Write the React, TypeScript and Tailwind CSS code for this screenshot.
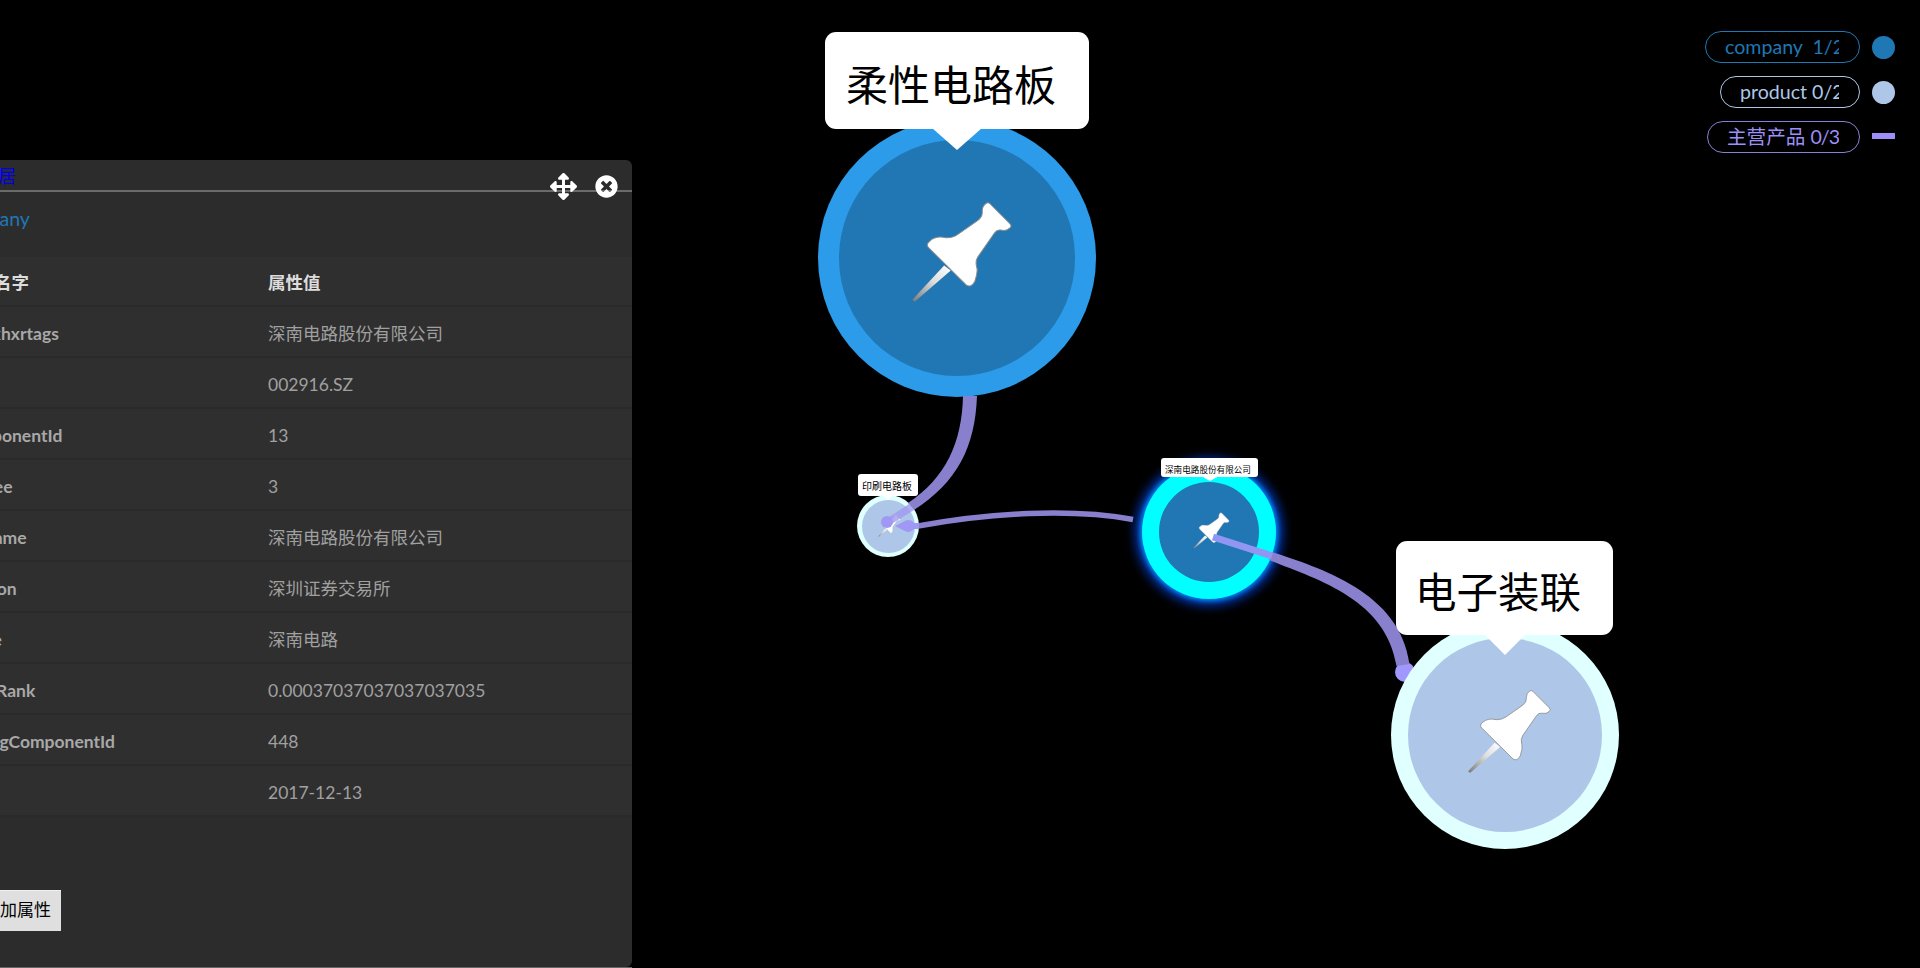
import { FaArrowsAlt, FaTimesCircle } from "react-icons/fa";

const LATO = "font-['Lato','Noto_Sans_CJK_SC',sans-serif]";

const rows: [string, string][] = [
  ["stockhxrtags", "深南电路股份有限公司"],
  ["code", "002916.SZ"],
  ["componentId", "13"],
  ["degree", "3"],
  ["fullname", "深南电路股份有限公司"],
  ["portion", "深圳证券交易所"],
  ["name", "深南电路"],
  ["pageRank", "0.00037037037037037035"],
  ["strongComponentId", "448"],
  ["date", "2017-12-13"],
];

function Pin({ size, className }: { size: number; className: string }) {
  return (
    <svg width={size} height={size} viewBox="335 545 305 305" className={className}>
      <defs>
        <linearGradient id="needle" x1="0" y1="1" x2="1" y2="0">
          <stop offset="0" stopColor="#777777" />
          <stop offset="0.55" stopColor="#dddddd" />
          <stop offset="1" stopColor="#ffffff" />
        </linearGradient>
      </defs>
      <path d="M434 738 L454 753 L346 846 L339 840 Z" fill="url(#needle)" />
      <path
        d="M548 575 Q548 560 560 552 Q566 548 572 554 L630 612 Q638 620 630 626 Q620 636 603 632 Q592 630 585 640 L535 712 Q526 726 532 745 Q535 760 526 785 Q515 806 500 796 L388 685 Q378 675 392 664 Q410 648 440 655 Q460 656 475 645 L535 603 Q550 592 548 575 Z"
        fill="#ffffff"
        stroke="#8c8c8c"
        strokeWidth="3"
      />
    </svg>
  );
}

function Label({
  text,
  boxClass,
  textClass,
  arrowClass,
}: {
  text: string;
  boxClass: string;
  textClass: string;
  arrowClass: string;
}) {
  return (
    <div className={`absolute z-10 flex items-center whitespace-nowrap bg-white text-black font-['Noto_Sans_CJK_SC',sans-serif] ${boxClass}`}>
      <span className={textClass}>{text}</span>
      <div className={`absolute top-full left-1/2 -translate-x-1/2 -translate-y-[1px] border-x-transparent border-t-white ${arrowClass}`} />
    </div>
  );
}

function Graph() {
  return (
    <div className="absolute inset-0">
      {/* arrow head that lies under node 4 */}
      <svg className="absolute inset-0" width="1920" height="968" viewBox="0 0 1920 968">
        <circle cx="1405" cy="672" r="10" fill="#a098ff" />
      </svg>
      {/* node 1 */}
      <div className="absolute left-[818px] top-[119px] w-[278px] h-[278px] rounded-full bg-[#2b9bea] flex items-center justify-center">
        <div className="w-[236px] h-[236px] rounded-full bg-[#2077b4] flex items-center justify-center">
          <Pin size={102} className="translate-x-[5px] -translate-y-[6px]" />
        </div>
      </div>
      {/* node 2 */}
      <div className="absolute left-[857px] top-[495px] w-[62px] h-[62px] rounded-full bg-[#e0ffff] flex items-center justify-center">
        <div className="w-[53px] h-[53px] rounded-full bg-[#aec7e8] flex items-center justify-center">
          <Pin size={23} className="translate-x-[1px] -translate-y-[1px]" />
        </div>
      </div>
      {/* node 3 */}
      <div className="absolute left-[1142px] top-[465px] w-[134px] h-[134px] rounded-full bg-[#00ffff] shadow-[0_0_5px_2px_#0090ff,0_0_10px_8px_#002a90] flex items-center justify-center">
        <div className="w-[100px] h-[100px] rounded-full bg-[#2077b4] flex items-center justify-center">
          <Pin size={37} className="translate-x-[2px] -translate-y-[2px]" />
        </div>
      </div>
      {/* node 4 */}
      <div className="absolute left-[1391px] top-[621px] w-[228px] h-[228px] rounded-full bg-[#e0ffff] flex items-center justify-center">
        <div className="w-[194px] h-[194px] rounded-full bg-[#aec7e8] flex items-center justify-center">
          <Pin size={85} className="translate-x-[4px] -translate-y-[4px]" />
        </div>
      </div>

      {/* links */}
      <svg className="absolute inset-0" width="1920" height="968" viewBox="0 0 1920 968">
        {/* node 1 to node 2 */}
        <path d="M963 396 L977 396 C975 448 957 482 914 510 L908 503 C946 478 962 442 963 396 Z" fill="#8880cc" />
        <path d="M909 504 L914 510 L890 525 L886 519 Z" fill="#a098f0" opacity="0.8" />
        <circle cx="887" cy="522" r="6" fill="#a098f5" />
        {/* node 3 to node 2 */}
        <path d="M918 526 C990 513 1070 508 1133 519.5" fill="none" stroke="#8880cc" strokeWidth="5.5" />
        <path d="M895 526 L907 520 Q913 520 914 523 L919 523 L919 529 L914 529 Q912 532 907 532 Z" fill="#a098f5" />
        {/* node 3 to node 4 */}
        <path d="M1272 552 C1320 568 1400 592 1409.5 664 L1396.5 666 C1386 600 1320 580 1269 560 Z" fill="#8880cc" />
        <path d="M1213 537 L1272 556" fill="none" stroke="#9096f2" strokeWidth="7" />
      </svg>

      <Label
        text="柔性电路板"
        boxClass="left-[825px] top-[32px] w-[264px] h-[97px] rounded-[11px] pl-[21px]"
        textClass="text-[42px] leading-none mt-[5px]"
        arrowClass="border-x-[25px] border-t-[22px]"
      />
      <Label
        text="印刷电路板"
        boxClass="left-[858px] top-[474px] w-[60px] h-[22px] rounded-[3px] pl-[4px]"
        textClass="text-[10px] leading-none mt-[1px]"
        arrowClass="border-x-[5px] border-t-[5px]"
      />
      <Label
        text="深南电路股份有限公司"
        boxClass="left-[1161px] top-[458px] w-[97px] h-[19px] rounded-[3px] pl-[4px]"
        textClass="text-[8.6px] leading-none mt-[3px]"
        arrowClass="border-x-[9px] border-t-[5px]"
      />
      <Label
        text="电子装联"
        boxClass="left-[1396px] top-[541px] w-[217px] h-[94px] rounded-[11px] pl-[19px]"
        textClass="text-[41.5px] leading-none mt-[5px]"
        arrowClass="border-x-[21px] border-t-[21px]"
      />
    </div>
  );
}

function Legend() {
  return (
    <div className={`absolute right-[25px] top-[31px] flex flex-col items-end gap-[13px] text-[19.6px] ${LATO}`}>
      <div className="flex items-center gap-[12px]">
        <div className="w-[155px] h-[32px] rounded-full border-[1.5px] border-[#1f77b4] text-[#1f77b4] pl-[19px]">
          <div className="w-[114px] overflow-hidden whitespace-pre leading-[30px]">company  1/2</div>
        </div>
        <div className="w-[23px] h-[23px] rounded-full bg-[#1f77b4]" />
      </div>
      <div className="flex items-center gap-[12px]">
        <div className="w-[140px] h-[32px] rounded-full border-[1.5px] border-[#aec7e8] text-[#aec7e8] pl-[19px]">
          <div className="w-[99px] overflow-hidden whitespace-pre leading-[30px]">product 0/2</div>
        </div>
        <div className="w-[23px] h-[23px] rounded-full bg-[#aec7e8]" />
      </div>
      <div className="flex items-center gap-[12px]">
        <div className="w-[153px] h-[32px] rounded-full border-[1.5px] border-[#8a7fd6] text-[#9c8ff5] pl-[19px]">
          <div className="w-[112px] overflow-hidden whitespace-pre leading-[30px]">
            主营产品 <span className="tracking-[-1px]">0/3</span>
          </div>
        </div>
        <div className="w-[23px] h-[6px] bg-[#9c8ff5] -mt-[3px]" />
      </div>
    </div>
  );
}

function Panel() {
  return (
    <div className={`absolute left-[-60px] top-[160px] w-[692px] h-[807px] rounded-[6px] bg-[#2c2c2c] text-[17.5px] overflow-hidden ${LATO}`}>
      <div className="relative h-[32px] border-b-2 border-[#6b6b6b]">
        <a className="absolute left-[4px] top-[1px] text-[#0000f0] leading-[30px] text-[18px] whitespace-nowrap">
          展开邻居
        </a>
        <FaArrowsAlt className="absolute left-[610px] top-[13px] text-white w-[27px] h-[27px]" />
        <FaTimesCircle className="absolute left-[655px] top-[15px] text-white w-[23px] h-[23px]" />
      </div>
      <div className="h-[65px] pl-[12px] pt-[14px] text-[#1f77b4] text-[19.6px] leading-[25px]">company</div>
      <div className="flex h-[50px] items-center pt-[4px] bg-[#2f2f2f] border-b-2 border-[#2a2a2a]">
        <div className="w-[328px] pl-[19px] font-bold text-[#dcdcdc]">属性名字</div>
        <div className="flex-1 text-[#dcdcdc] font-bold">属性值</div>
      </div>
      {rows.map(([k, v]) => (
        <div key={k} className="flex h-[51px] items-center pt-[6px] bg-[#2f2f2f] border-b-2 border-[#2a2a2a]">
          <div className="w-[328px] pl-[19px] font-bold text-[#a8a8a8]">{k}</div>
          <div className="flex-1 text-[#a0a0a0]">{v}</div>
        </div>
      ))}
      <div className="pl-[39px] pt-[73px]">
        <button className="h-[41px] w-[82px] pr-[6px] pb-[4px] bg-[#dfdfdf] text-black text-[17px] font-['Noto_Sans_CJK_SC',sans-serif] border-t border-[#f0f0f0]">
          添加属性
        </button>
      </div>
    </div>
  );
}

export default function App() {
  return (
    <div className="relative w-[1920px] h-[968px] overflow-hidden bg-black">
      <Graph />
      <Legend />
      <Panel />
      <div className="absolute bottom-0 left-0 w-[632px] h-px bg-[#666666]" />
    </div>
  );
}
